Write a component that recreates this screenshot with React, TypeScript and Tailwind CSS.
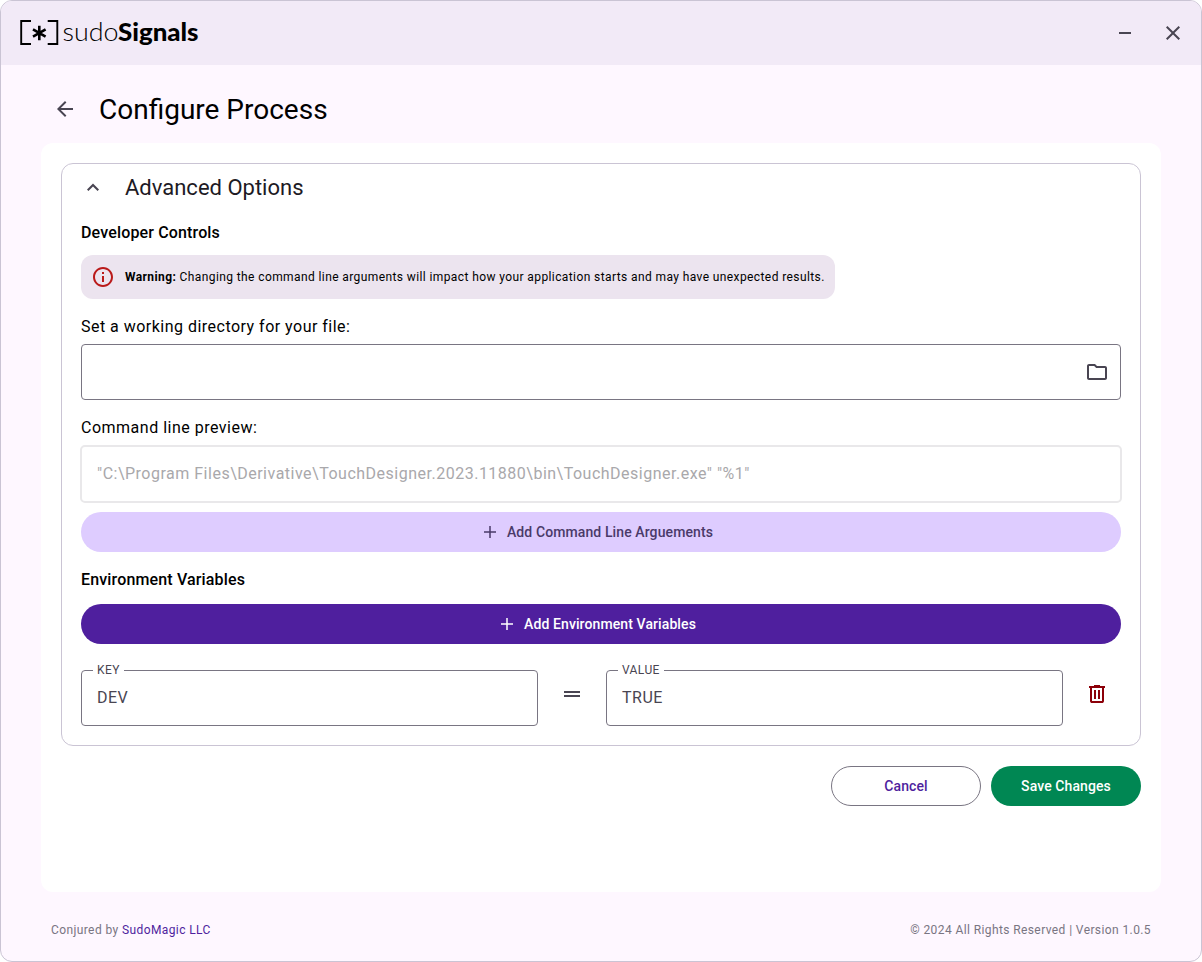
import type { ReactNode } from "react";

const paths = {
  back: "M20 11H7.83l5.59-5.59L12 4l-8 8 8 8 1.41-1.41L7.83 13H20v-2z",
  minimize: "M6 11h12v2H6z",
  close:
    "M19 6.41L17.59 5 12 10.59 6.41 5 5 6.41 10.59 12 5 17.59 6.41 19 12 13.41 17.59 19 19 17.59 13.41 12z",
  collapse: "M12 7.6l-6 6 1.41 1.41L12 10.43l4.59 4.58L18 13.6z",
  info: "M11 7h2v2h-2zm0 4h2v6h-2zm1-9C6.48 2 2 6.48 2 12s4.48 10 10 10 10-4.48 10-10S17.52 2 12 2zm0 18c-4.41 0-8-3.59-8-8s3.59-8 8-8 8 3.59 8 8-3.59 8-8 8z",
  folder:
    "M9.17 6l2 2H20v10H4V6h5.17M10 4H4c-1.1 0-1.99.9-1.99 2L2 18c0 1.1.9 2 2 2h16c1.1 0 2-.9 2-2V8c0-1.1-.9-2-2-2h-8l-2-2z",
  equals: "M20 9H4v2h16V9zM4 15h16v-2H4v2z",
  trash:
    "M7 21c-.55 0-1.02-.2-1.41-.59C5.2 20.02 5 19.55 5 19V6H4V4h5V3h6v1h5v2h-1v13c0 .55-.2 1.02-.59 1.41-.39.39-.86.59-1.41.59H7zM17 6H7v13h10V6zM9 17h2V8H9v9zm4 0h2V8h-2v9z",
};

function Icon({ name, className = "" }: { name: keyof typeof paths; className?: string }) {
  return (
    <svg viewBox="0 0 24 24" fill="currentColor" className={`size-6 shrink-0 ${className}`}>
      <path d={paths[name]} />
    </svg>
  );
}

function Plus() {
  return (
    <svg viewBox="0 0 18 18" fill="currentColor" className="size-[18px] shrink-0">
      <path d="M8.25 15V9.75H3v-1.5h5.25V3h1.5v5.25H15v1.5H9.75V15z" />
    </svg>
  );
}

function Logo() {
  return (
    <div className="flex items-center text-black">
      <svg viewBox="0 0 41 26" fill="none" stroke="currentColor" className="h-[26px] w-[41px]">
        <path d="M12 1H2.2V24H12M28.7 1H38.3V24H28.7" strokeWidth="1.9" />
        <path d="M20.3 5.7V20.3M14 9.3L26.6 16.7M26.6 9.3L14 16.7" strokeWidth="2.6" />
      </svg>
      <svg viewBox="0 0 140 34" fill="currentColor" className="h-[34px] w-[140px]">
        <text x="2.5" y="24.5" fontSize="26" textLength="56" lengthAdjust="spacingAndGlyphs" className="font-[Lato] font-light">
          sudo
        </text>
        <text x="58" y="24.5" fontSize="25" textLength="80.5" lengthAdjust="spacingAndGlyphs" className="font-[Lato] font-black">
          Signals
        </text>
      </svg>
    </div>
  );
}

function WideButton({ className, children }: { className: string; children: ReactNode }) {
  return (
    <button
      className={`flex h-10 w-full items-center justify-center gap-2 rounded-full pr-6 pl-4 text-sm leading-5 font-medium tracking-[0.1px] ${className}`}
    >
      <Plus />
      {children}
    </button>
  );
}

function OutlinedField({ label, value }: { label: string; value: string }) {
  return (
    <div className="relative flex h-14 w-[457px] items-center rounded border border-[#797582] px-[15px] text-base tracking-[0.5px] text-[#494552]">
      <span className="absolute -top-[9px] left-[11px] bg-white px-1 text-xs leading-4 tracking-[0.4px]">{label}</span>
      {value}
    </div>
  );
}

export default function App() {
  return (
    <div className="flex h-[962px] w-[1202px] flex-col overflow-hidden rounded-xl border border-[#cac4d4] bg-[#fef7ff] font-[Roboto,sans-serif] text-black">
      <header className="flex h-16 shrink-0 items-center justify-between bg-[#f2eaf7] pr-4 pl-[18px]">
        <Logo />
        <div className="flex gap-6 text-[#494552]">
          <Icon name="minimize" />
          <Icon name="close" />
        </div>
      </header>

      <div className="flex h-[78px] shrink-0 items-center gap-[22px] pt-[10px] pl-[52px]">
        <Icon name="back" className="text-[#494552]" />
        <h1 className="pt-0.5 text-[28px] leading-9">Configure Process</h1>
      </div>

      <main className="mx-10 h-[749px] shrink-0 rounded-xl bg-white p-5">
        <section className="h-[583px] rounded-xl border border-[#cac4d4] px-[19px]">
          <div className="flex h-12 items-center gap-5 text-[#1d1a24]">
            <Icon name="collapse" className="text-[#494552]" />
            <h2 className="text-[22px] leading-7">Advanced Options</h2>
          </div>

          <h3 className="mt-[9px] text-base leading-6 font-medium tracking-[0.15px]">Developer Controls</h3>
          <div className="mt-[10px] flex h-11 w-[754px] items-center gap-[10px] rounded-xl bg-[#ece4ef] pl-[10px]">
            <Icon name="info" className="text-[#ba1a1a]" />
            <p className="text-xs leading-4 tracking-[0.4px] whitespace-nowrap">
              <b className="font-bold">Warning:</b> Changing the command line arguments will impact how your application
              starts and may have unexpected results.
            </p>
          </div>

          <p className="mt-4 text-base leading-6 tracking-[0.48px]">Set a working directory for your file:</p>
          <div className="mt-[5px] flex h-14 items-center justify-end rounded border border-[#797582] pr-[11px] text-[#494552]">
            <Icon name="folder" />
          </div>

          <p className="mt-4 text-base leading-6 tracking-[0.5px]">Command line preview:</p>
          <div className="-mx-px mt-[5px] flex h-[58px] items-center rounded-[5px] border-2 border-[#e9e8ea] px-[15px] text-base tracking-[0.5px] text-[#a9a8ab]">
            "C:\Program Files\Derivative\TouchDesigner.2023.11880\bin\TouchDesigner.exe" "%1"
          </div>

          <div className="mt-[9px]">
            <WideButton className="bg-[#deccff] text-[#4a3a69]">Add Command Line Arguements</WideButton>
          </div>

          <h3 className="mt-4 text-base leading-6 font-medium tracking-[0.15px]">Environment Variables</h3>
          <div className="mt-3">
            <WideButton className="bg-[#4f1f9e] text-white">Add Environment Variables</WideButton>
          </div>

          <div className="mt-[26px] flex items-center">
            <OutlinedField label="KEY" value="DEV" />
            <Icon name="equals" className="mx-[22px] mb-2 text-[#494552]" />
            <OutlinedField label="VALUE" value="TRUE" />
            <Icon name="trash" className="mb-2 ml-[22px] text-[#8c0009]" />
          </div>
        </section>

        <div className="mt-5 flex justify-end gap-[10px] text-sm leading-5 font-medium tracking-[0.1px]">
          <button className="h-10 w-[150px] rounded-full border border-[#797582] text-[#4f1f9e]">Cancel</button>
          <button className="h-10 w-[150px] rounded-full bg-[#008753] text-white">Save Changes</button>
        </div>
      </main>

      <footer className="flex flex-1 items-center justify-between px-[50px] pt-[7px] text-xs leading-4 tracking-[0.4px] text-[#797582]">
        <p>
          Conjured by <a className="text-[#4f1f9e]">SudoMagic LLC</a>
        </p>
        <p>© 2024 All Rights Reserved | Version 1.0.5</p>
      </footer>
    </div>
  );
}
